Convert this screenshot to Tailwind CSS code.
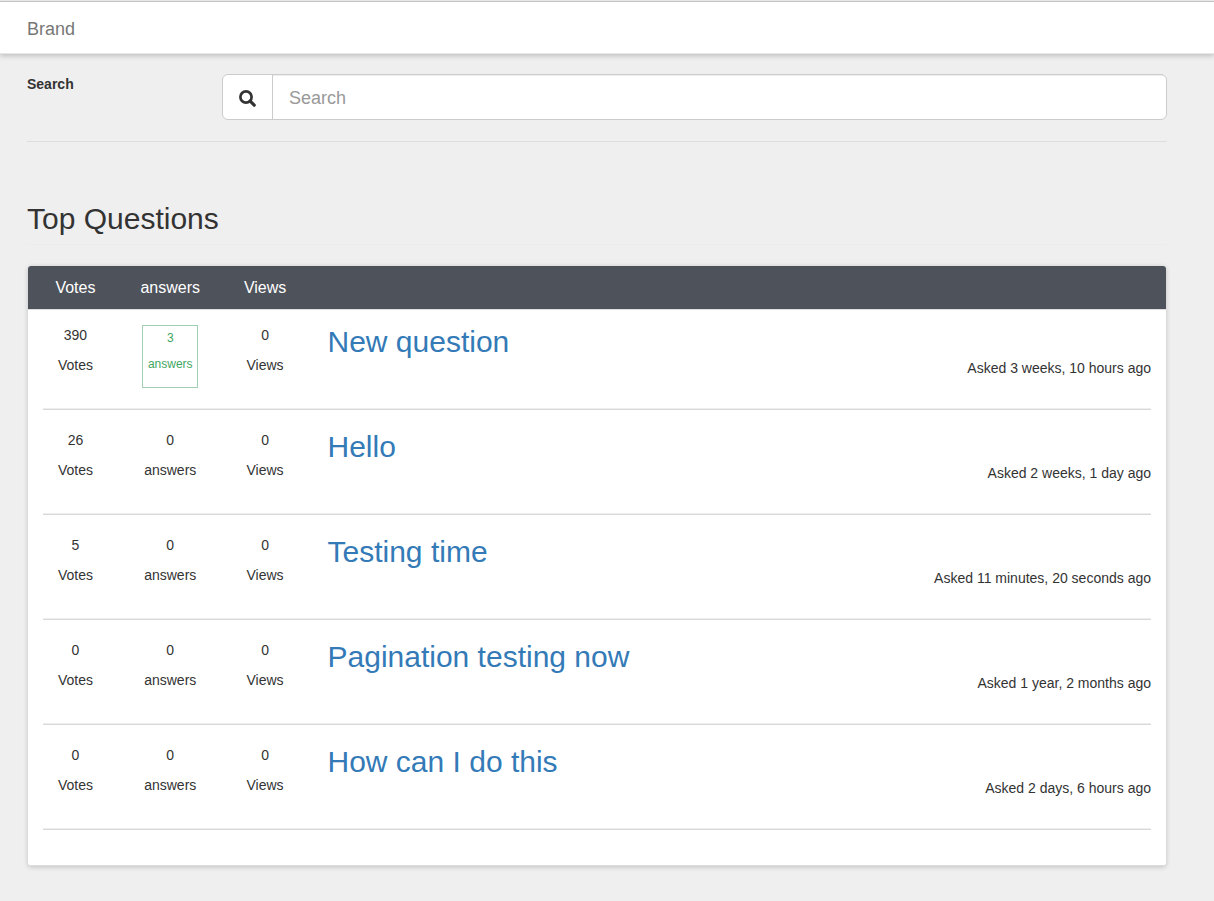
<!DOCTYPE html>
<html lang="en">
<head>
  <meta charset="UTF-8" />
  <meta name="viewport" content="width=device-width, initial-scale=1.0" />
  <title>Top Questions</title>
  <script src="https://cdn.jsdelivr.net/npm/@tailwindcss/browser@4"></script>
</head>
<body class="bg-[#efefef] font-['Liberation_Sans',Arial,sans-serif] text-sm leading-5 text-[#333]">
  <div class="h-px bg-[#efefef]"></div>
  <nav class="flex h-[53px] items-center border-t border-b border-t-[#c3c3c3] border-b-[#e7e7e7] bg-white pt-0.5 pl-[27px] shadow-[0_2px_5px_rgba(0,0,0,0.2)]">
    <a href="#" class="text-lg leading-5 text-[#777]">Brand</a>
  </nav>

  <main class="pt-5 pr-[47px] pb-[35px] pl-[27px]">
    <form class="grid grid-cols-[195px_1fr] items-start border-b border-[#ddd] pb-[21px]">
      <label for="search" class="font-bold">Search</label>
      <div class="flex h-[46px] overflow-hidden rounded-md border border-[#ccc] bg-white">
        <button type="submit" aria-label="Search" class="flex w-[50px] shrink-0 items-center justify-center border-r border-[#ccc]">
          <svg class="mt-0.5 h-[17px] w-[17px]" viewBox="0 0 17 17" fill="none" stroke="#333">
            <circle cx="7" cy="7" r="5.6" stroke-width="2.7" />
            <path d="M11.2 11.2L15.2 15.2" stroke-width="3.2" stroke-linecap="round" />
          </svg>
        </button>
        <input id="search" type="text" placeholder="Search" class="w-full px-4 pt-0.5 text-lg shadow-[inset_0_1px_1px_rgba(0,0,0,0.075)] outline-none placeholder:text-[#999]" />
      </div>
    </form>

    <h2 class="mt-[60px] border-b border-[#ececec] pb-[9px] text-3xl leading-[33px]">Top Questions</h2>

    <section class="mx-px mt-[21px] rounded-[3px] border-b border-[#ddd] bg-white pb-[35px] shadow-[0_1px_5px_rgba(0,0,0,0.2)]">
      <header class="grid h-11 grid-cols-12 items-center rounded-t-[3px] border-b border-[#ddd] bg-[#4e525b] text-center text-base text-white">
        <div>Votes</div>
        <div>answers</div>
        <div>Views</div>
      </header>

      <article class="mt-[15px] grid h-[63px] grid-cols-12 text-center">
        <div>
          <p class="mb-2.5">390</p>
          <p>Votes</p>
        </div>
        <div>
          <div class="mx-auto h-[63px] w-14 border border-[#a0cfb2] pt-0.5 text-xs leading-5 text-[#3fa663]">
            <p class="mb-1.5">3</p>
            <p>answers</p>
          </div>
        </div>
        <div>
          <p class="mb-2.5">0</p>
          <p>Views</p>
        </div>
        <div class="col-span-9 px-[15px] text-left">
          <h3 class="text-3xl leading-[33px]"><a href="#" class="text-[#337ab7]">New question</a></h3>
          <p class="text-right">Asked 3 weeks, 10 hours ago</p>
        </div>
      </article>
      <hr class="mx-[15px] my-5 h-0.5 border-t border-b border-t-[#eee] border-b-[#d9d9d9]" />

      <article class="grid h-[63px] grid-cols-12 text-center">
        <div>
          <p class="mb-2.5">26</p>
          <p>Votes</p>
        </div>
        <div>
          <p class="mb-2.5">0</p>
          <p>answers</p>
        </div>
        <div>
          <p class="mb-2.5">0</p>
          <p>Views</p>
        </div>
        <div class="col-span-9 px-[15px] text-left">
          <h3 class="text-3xl leading-[33px]"><a href="#" class="text-[#337ab7]">Hello</a></h3>
          <p class="text-right">Asked 2 weeks, 1 day ago</p>
        </div>
      </article>
      <hr class="mx-[15px] my-5 h-0.5 border-t border-b border-t-[#eee] border-b-[#d9d9d9]" />

      <article class="grid h-[63px] grid-cols-12 text-center">
        <div>
          <p class="mb-2.5">5</p>
          <p>Votes</p>
        </div>
        <div>
          <p class="mb-2.5">0</p>
          <p>answers</p>
        </div>
        <div>
          <p class="mb-2.5">0</p>
          <p>Views</p>
        </div>
        <div class="col-span-9 px-[15px] text-left">
          <h3 class="text-3xl leading-[33px]"><a href="#" class="text-[#337ab7]">Testing time</a></h3>
          <p class="text-right">Asked 11 minutes, 20 seconds ago</p>
        </div>
      </article>
      <hr class="mx-[15px] my-5 h-0.5 border-t border-b border-t-[#eee] border-b-[#d9d9d9]" />

      <article class="grid h-[63px] grid-cols-12 text-center">
        <div>
          <p class="mb-2.5">0</p>
          <p>Votes</p>
        </div>
        <div>
          <p class="mb-2.5">0</p>
          <p>answers</p>
        </div>
        <div>
          <p class="mb-2.5">0</p>
          <p>Views</p>
        </div>
        <div class="col-span-9 px-[15px] text-left">
          <h3 class="text-3xl leading-[33px]"><a href="#" class="text-[#337ab7]">Pagination testing now</a></h3>
          <p class="text-right">Asked 1 year, 2 months ago</p>
        </div>
      </article>
      <hr class="mx-[15px] my-5 h-0.5 border-t border-b border-t-[#eee] border-b-[#d9d9d9]" />

      <article class="grid h-[63px] grid-cols-12 text-center">
        <div>
          <p class="mb-2.5">0</p>
          <p>Votes</p>
        </div>
        <div>
          <p class="mb-2.5">0</p>
          <p>answers</p>
        </div>
        <div>
          <p class="mb-2.5">0</p>
          <p>Views</p>
        </div>
        <div class="col-span-9 px-[15px] text-left">
          <h3 class="text-3xl leading-[33px]"><a href="#" class="text-[#337ab7]">How can I do this</a></h3>
          <p class="text-right">Asked 2 days, 6 hours ago</p>
        </div>
      </article>
      <hr class="mx-[15px] mt-5 h-0.5 border-t border-b border-t-[#eee] border-b-[#d9d9d9]" />
    </section>
  </main>
</body>
</html>
